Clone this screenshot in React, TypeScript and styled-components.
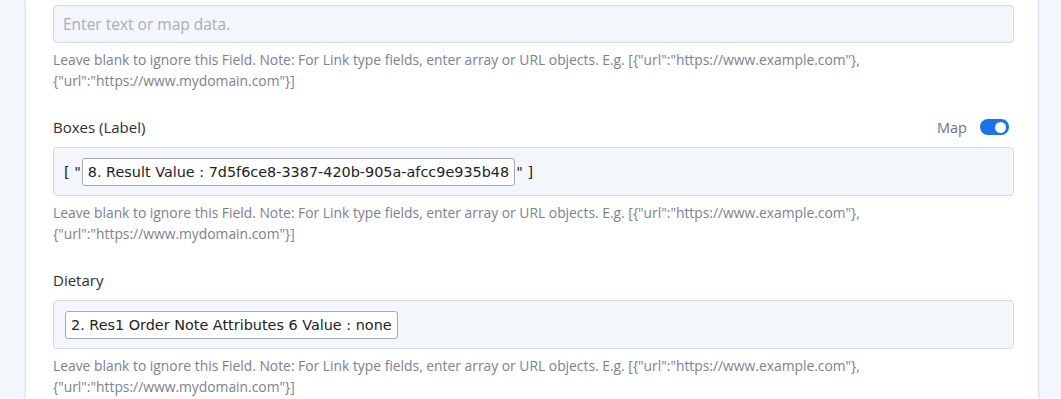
import React, { FC } from 'react';
import styled, { createGlobalStyle } from 'styled-components';

const GlobalStyle = createGlobalStyle`
  html, body {
    margin: 0;
    padding: 0;
    background: #f3f6fb;
  }
  body {
    font-family: "Open Sans", "Liberation Sans", sans-serif;
  }
`;

const Page = styled.div`
  display: flex;
  padding: 0 23px 0 26px;
  min-height: 399px;
  box-sizing: border-box;
`;

const Panel = styled.div`
  flex: 1;
  background: #ffffff;
  box-shadow: -1px 0 2px rgba(120, 150, 220, 0.25), 1px 0 2px rgba(120, 150, 220, 0.25);
  padding: 5px 24px 0 27px;
  display: flex;
  flex-direction: column;
  gap: 26px;
`;

const Field = styled.div`
  display: flex;
  flex-direction: column;
`;

const LabelRow = styled.div`
  display: flex;
  align-items: center;
  justify-content: space-between;
  height: 20px;
  margin-bottom: 10px;
`;

const Label = styled.div`
  font-size: 15px;
  color: #2b2f36;
`;

const MapSwitch = styled.div`
  display: flex;
  align-items: center;
  gap: 13px;
  font-size: 14.5px;
  color: #6f7680;
  padding-right: 5px;
`;

const Toggle = styled.div<{ $on: boolean }>`
  position: relative;
  width: 29px;
  height: 16px;
  border-radius: 8px;
  background: ${p => (p.$on ? '#1a73e8' : '#c8ccd2')};

  &::after {
    content: '';
    position: absolute;
    top: 2.5px;
    left: ${p => (p.$on ? '15px' : '3px')};
    width: 11px;
    height: 11px;
    border-radius: 50%;
    background: #ffffff;
  }
`;

const InputBox = styled.div<{ $tall?: boolean }>`
  display: flex;
  align-items: center;
  height: ${p => (p.$tall ? '47px' : '36px')};
  background: #f3f6fa;
  border: 1px solid #d6dae0;
  border-radius: 4px;
  padding: 0 9px;
`;

const Placeholder = styled.span`
  color: #a9aeb5;
  font-size: 15.5px;
`;

const Bracket = styled.span`
  font-family: "DejaVu Sans", Verdana, sans-serif;
  font-size: 14.4px;
  color: #222;
  white-space: pre;
  margin: 0 1px;
`;

const Token = styled.span<{ $inset?: boolean }>`
  display: inline-flex;
  align-items: center;
  height: 26px;
  padding: 0 5px;
  margin-left: ${p => (p.$inset ? '2px' : '0')};
  background: #ffffff;
  border: 1px solid #a6aab0;
  border-radius: 3px;
  font-family: "DejaVu Sans", Verdana, sans-serif;
  font-size: 14.4px;
  color: #222;
  white-space: nowrap;
`;

const Help = styled.div`
  margin-top: 6px;
  font-size: 13.85px;
  line-height: 21px;
  color: #7b828b;
`;

const HELP =
  'Leave blank to ignore this Field. Note: For Link type fields, enter array or URL objects. E.g. [{"url":"https://www.example.com"}, {"url":"https://www.mydomain.com"}]';

const App: FC = () => {
  return (
    <>
      <GlobalStyle />
      <Page>
        <Panel>
          <Field>
            <InputBox>
              <Placeholder>Enter text or map data.</Placeholder>
            </InputBox>
            <Help>{HELP}</Help>
          </Field>

          <Field>
            <LabelRow>
              <Label>Boxes (Label)</Label>
              <MapSwitch>
                Map
                <Toggle $on />
              </MapSwitch>
            </LabelRow>
            <InputBox $tall>
              <Bracket>[ "</Bracket>
              <Token>8. Result Value : 7d5f6ce8-3387-420b-905a-afcc9e935b48</Token>
              <Bracket>" ]</Bracket>
            </InputBox>
            <Help>{HELP}</Help>
          </Field>

          <Field>
            <LabelRow>
              <Label>Dietary</Label>
            </LabelRow>
            <InputBox $tall>
              <Token $inset>2. Res1 Order Note Attributes 6 Value : none</Token>
            </InputBox>
            <Help>{HELP}</Help>
          </Field>
        </Panel>
      </Page>
    </>
  );
};

export default App;
